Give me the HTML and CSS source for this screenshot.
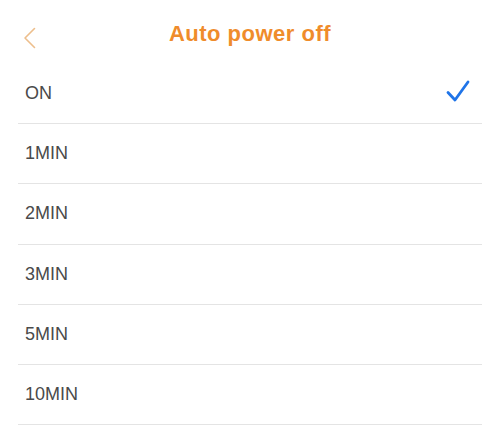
FILE: index.html
```html
<!DOCTYPE html>
<html>
<head>
<meta charset="utf-8">
<link rel="stylesheet" href="styles.css">
</head>
<body>
<div class="screen">
  <header class="topbar">
    <span class="back">
      <svg width="14" height="22" viewBox="0 0 14 22"><path d="M11.5 1.5 L2 11 L11.5 20.5" fill="none" stroke="#EDBE8C" stroke-width="1.6" stroke-linecap="round" stroke-linejoin="round"/></svg>
    </span>
    <h1 class="title">Auto power off</h1>
  </header>
  <ul class="list">
    <li class="item"><span>ON</span>
      <svg class="check" width="24" height="23" viewBox="0 0 24 23"><path d="M2 12.5 L9 20 L22 2" fill="none" stroke="#1F74E8" stroke-width="2.8" stroke-linecap="round" stroke-linejoin="round"/></svg>
    </li>
    <li class="item"><span>1MIN</span></li>
    <li class="item"><span>2MIN</span></li>
    <li class="item"><span>3MIN</span></li>
    <li class="item"><span>5MIN</span></li>
    <li class="item"><span>10MIN</span></li>
  </ul>
</div>
</body>
</html>
```

FILE: styles.css
```css
html, body {
  margin: 0;
  padding: 0;
  background: #ffffff;
}
body {
  font-family: "Liberation Sans", Arial, sans-serif;
}
.screen {
  width: 500px;
  height: 432px;
  overflow: hidden;
}
.topbar {
  position: relative;
  height: 64px;
  display: flex;
  align-items: center;
  justify-content: center;
}
.back {
  position: absolute;
  left: 23px;
  top: 27px;
  display: block;
  width: 14px;
  height: 22px;
}
.back svg { display: block; }
.title {
  margin: 0;
  margin-top: 4px;
  font-size: 22px;
  font-weight: bold;
  letter-spacing: 0.5px;
  color: #EF8C2B;
}
.list {
  list-style: none;
  margin: 0 18px;
  padding: 0;
}
.item {
  height: 59.2px;
  border-bottom: 1px solid #E4E4E4;
  display: flex;
  align-items: center;
  justify-content: space-between;
  padding: 0 12px 0 7px;
  font-size: 18px;
  color: #4A4A4A;
}
.item span {
  position: relative;
  top: 0;
}
.check {
  display: block;
  margin-top: -4px;
}
```
